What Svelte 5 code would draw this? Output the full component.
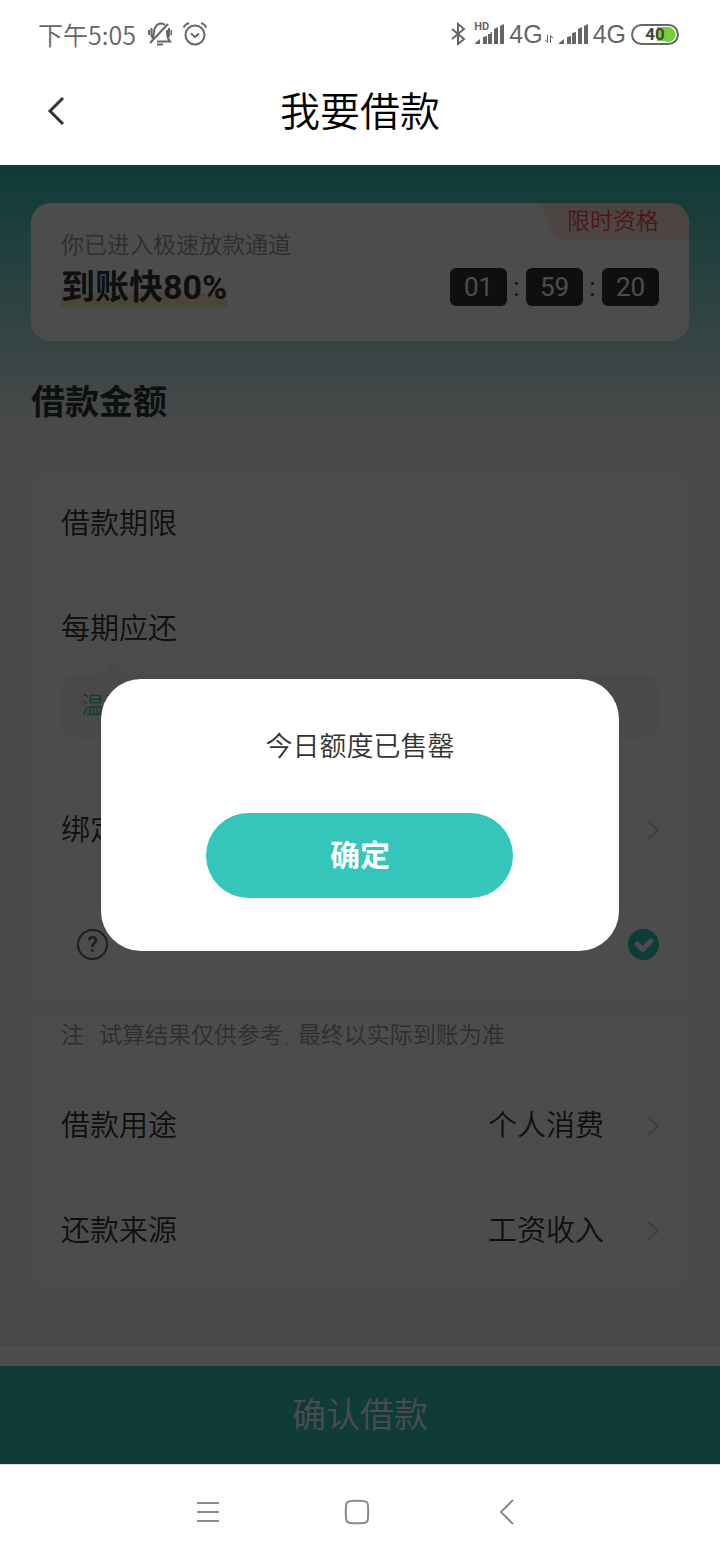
<script lang="ts">
  let showDialog = $state(true);
  let agreed = $state(true);

  const countdown = ["01", "59", "20"];
  const details = [
    { label: "借款用途", value: "个人消费" },
    { label: "还款来源", value: "工资收入" },
  ];
</script>

{#snippet chevron()}
  <svg class="chevron" viewBox="0 0 12 20" aria-hidden="true">
    <path d="M1 1l10 9-10 9" />
  </svg>
{/snippet}

{#snippet signal()}
  <svg class="signal" viewBox="0 0 29 22" aria-hidden="true">
    <path d="M0 21v-1l5-4v5zM8 21v-7l4-1v8zM13 21V10l4-1v12zM19 21V6l4-2v17zM25 21V3l4-2v20z" />
  </svg>
{/snippet}

<div class="screen">
  <div class="status">
    <span class="time">下午5:05</span>
    <svg class="mute" viewBox="0 0 24 24" aria-hidden="true">
      <path d="M4 17C7 13 5 9 7 6c1.500-3 4-4.500 6-4.500S16 2 17 3M19 8c0 5 0 8 3 11.500H9M2 21L20 2M9 22.500h6M1 8v5M3.500 6v9M21 6v9M23.500 8v5" />
    </svg>
    <svg class="alarm" viewBox="0 0 26 26" aria-hidden="true">
      <circle cx="13" cy="14" r="9.500" />
      <path d="M9 12.500l4 3.500 4-3.500M1.500 6.500C3 4 5 2.500 7 2M24.500 6.500C23 4 21 2.500 19 2" />
    </svg>
    <div class="radio">
      <svg class="bluetooth" viewBox="0 0 16 24" aria-hidden="true">
        <path d="M2 7l12 10-6 5V2l6 5L2 17" />
      </svg>
      <div class="sim">
        <span class="hd">HD</span>
        {@render signal()}
      </div>
      <span class="net">4G</span>
      <svg class="updown" viewBox="0 0 10 10" aria-hidden="true">
        <path d="M3.500 1v7.500L1 6M6.500 9V1.500L9 4" />
      </svg>
      {@render signal()}
      <span class="net">4G</span>
      <span class="battery">40</span>
    </div>
  </div>

  <header>
    <button class="back" aria-label="返回">
      <svg viewBox="0 0 18 30" aria-hidden="true"><path d="M16 2L3 15l13 13" /></svg>
    </button>
    <h1>我要借款</h1>
  </header>

  <main>
    <div class="content">
      <section class="promo">
        <div class="badge">
          <svg viewBox="0 0 149 38" preserveAspectRatio="none" aria-hidden="true">
            <path d="M0 0h149v38H27c-7 0-10-4-13-9z" />
          </svg>
          <span>限时资格</span>
        </div>
        <p>你已进入极速放款通道</p>
        <div class="promo-row">
          <strong>到账快80%</strong>
          <div class="countdown">
            {#each countdown as part, i}
              {#if i > 0}<span class="colon">:</span>{/if}
              <span class="digits">{part}</span>
            {/each}
          </div>
        </div>
      </section>

      <h2>借款金额</h2>

      <section class="card terms">
        <div class="row">借款期限</div>
        <div class="row">每期应还</div>
        <div class="tip">温馨</div>
        <button class="row">
          <span>绑定</span>
          {@render chevron()}
        </button>
        <div class="row agreement">
          <button class="help" aria-label="帮助">?</button>
          <label>
            <input type="checkbox" bind:checked={agreed} aria-label="同意" />
            <svg viewBox="0 0 31 31" aria-hidden="true"><path d="M9 15l5.500 5.500L23 12" /></svg>
          </label>
        </div>
      </section>

      <section class="card purpose">
        <p>注: 试算结果仅供参考, 最终以实际到账为准</p>
        {#each details as item}
          <button class="row">
            <span>{item.label}</span>
            <span class="value">{item.value}</span>
            {@render chevron()}
          </button>
        {/each}
      </section>
    </div>

    <footer>
      <button class="submit">确认借款</button>
    </footer>

    {#if showDialog}
      <div class="mask">
        <div class="dialog" role="alertdialog" aria-modal="true" aria-labelledby="dialog-text">
          <p id="dialog-text">今日额度已售罄</p>
          <button onclick={() => (showDialog = false)}>确定</button>
        </div>
      </div>
    {/if}
  </main>

  <nav>
    <button aria-label="菜单">
      <svg viewBox="0 0 26 26" aria-hidden="true"><path d="M2 4h22M2 13h22M2 22h22" /></svg>
    </button>
    <button aria-label="主页">
      <svg viewBox="0 0 26 26" aria-hidden="true">
        <path d="M7 2Q13 1.500 19 2 24 2 24 7 24.500 13 24 19 24 24 19 24 13 24.500 7 24 2 24 2 19 1.500 13 2 7 2 2 7 2z" />
      </svg>
    </button>
    <button aria-label="后退">
      <svg viewBox="0 0 26 26" aria-hidden="true"><path d="M20 1L8 13l12 12" /></svg>
    </button>
  </nav>
</div>

<style>
  :global(body) {
    margin: 0;
    background: #fff;
  }

  .screen {
    --teal: #34c5bb;
    --ink: #333;
    display: flex;
    flex-direction: column;
    min-height: 100vh;
    font-family: Roboto, "Noto Sans CJK SC", sans-serif;
    font-weight: 350;
    color: var(--ink);
  }

  .screen * {
    box-sizing: border-box;
  }

  button {
    padding: 0;
    border: 0;
    background: none;
    font: inherit;
    color: inherit;
  }

  h1,
  h2,
  p {
    margin: 0;
  }

  svg {
    display: block;
    flex-shrink: 0;
    fill: none;
    stroke: currentColor;
    stroke-width: 2;
  }

  .status {
    display: flex;
    align-items: center;
    height: 68px;
    padding: 0 41px 0 38px;
    color: #666;
  }

  .time {
    font-family: "Noto Sans CJK SC", sans-serif;
    font-size: 25px;
    line-height: 36px;
  }

  .mute {
    width: 24px;
    height: 24px;
    margin-left: 12px;
  }

  .alarm {
    width: 26px;
    height: 26px;
    margin-left: 10px;
  }

  .radio {
    display: flex;
    align-items: center;
    gap: 5px;
    margin-left: auto;
  }

  .bluetooth {
    width: 16px;
    height: 24px;
  }

  .sim {
    position: relative;
    margin-left: 4px;
  }

  .hd {
    position: absolute;
    top: -2px;
    left: -1px;
    font-size: 11px;
    font-weight: 700;
    line-height: 11px;
  }

  .signal {
    width: 29px;
    height: 22px;
    fill: currentColor;
    stroke: none;
  }

  .sim .signal {
    clip-path: polygon(0 50%, 52% 50%, 52% 0, 100% 0, 100% 100%, 0 100%);
  }

  .net {
    font-family: "Liberation Sans", sans-serif;
    font-size: 25px;
    line-height: 28px;
  }

  .updown {
    width: 10px;
    height: 10px;
    margin: 10px 0 0 -4px;
    stroke-width: 1;
  }

  .battery {
    width: 48px;
    height: 21px;
    border: 2px solid #666;
    border-radius: 11px;
    background: radial-gradient(circle at 35px 50%, #74d13d 7px, transparent 8px),
      linear-gradient(#74d13d, #74d13d) 24px center / 11px 14px no-repeat;
    font-size: 17px;
    font-weight: 700;
    line-height: 17px;
    text-align: center;
    color: #444;
  }

  header {
    display: grid;
    grid-template-columns: 1fr auto 1fr;
    align-items: center;
    height: 97px;
    padding: 0 47px 12px;
  }

  .back {
    justify-self: start;
  }

  .back svg {
    width: 18px;
    height: 30px;
    stroke-width: 3;
  }

  h1 {
    padding-top: 4px;
    font-size: 40px;
    font-weight: 350;
    line-height: 60px;
    color: #000;
  }

  main {
    position: relative;
    display: flex;
    flex: 1;
    flex-direction: column;
    background: linear-gradient(var(--teal), #f7f7f7 265px);
  }

  .content {
    flex: 1;
    padding: 38px 31px 58px;
  }

  .promo {
    position: relative;
    padding: 27px 30px 34px;
    border-radius: 20px;
    background: #fff;
    overflow: hidden;
  }

  .promo p,
  .badge,
  .purpose p {
    font-size: 23px;
    line-height: 32px;
  }

  .promo p,
  .purpose p {
    color: #999;
  }

  .badge {
    position: absolute;
    top: 0;
    right: 0;
    padding: 3px 30px 3px 28px;
    color: #f5533d;
  }

  .badge svg {
    position: absolute;
    inset: 0;
    width: 100%;
    height: 100%;
    fill: #ffe6e3;
    stroke: none;
  }

  .badge span {
    position: relative;
  }

  .promo-row {
    display: flex;
    align-items: flex-start;
    justify-content: space-between;
    margin-top: 6px;
  }

  .promo strong {
    background: linear-gradient(#ffecc0, #ffecc0) bottom / 100% 14px no-repeat;
    font-size: 34px;
    font-weight: 700;
    line-height: 39px;
  }

  .countdown {
    display: flex;
    font-size: 26px;
    font-weight: 400;
    line-height: 38px;
    text-align: center;
  }

  .digits {
    width: 57px;
    border-radius: 6px;
    background: var(--ink);
    color: #fff;
  }

  .colon {
    width: 19px;
  }

  h2 {
    margin: 37px 0 45px;
    font-size: 34px;
    font-weight: 700;
    line-height: 48px;
  }

  .card {
    padding: 0 30px;
    background: #fff;
  }

  .terms {
    border-radius: 20px 20px 0 0;
  }

  .row {
    display: flex;
    align-items: center;
    justify-content: space-between;
    width: 100%;
    height: 105px;
    font-size: 29px;
    line-height: 42px;
  }

  .value {
    margin: 0 43px 0 auto;
  }

  .chevron {
    width: 12px;
    height: 20px;
    color: #ccc;
  }

  .tip {
    position: relative;
    margin: -7px 0 39px;
    padding: 16px 20px;
    border-radius: 16px;
    background: #f4f4f4;
    font-size: 23px;
    line-height: 32px;
    color: var(--teal);
  }

  .tip::before {
    content: "";
    position: absolute;
    bottom: 100%;
    left: 40px;
    border: 12px solid transparent;
    border-top: 0;
    border-bottom-color: #f8f5f2;
  }

  .agreement {
    height: 113px;
    padding: 12px 0 0 16px;
  }

  .help {
    width: 31px;
    height: 31px;
    border: 2px solid #666;
    border-radius: 50%;
    font-size: 22px;
    font-weight: 500;
    line-height: 27px;
    color: #666;
  }

  .agreement label {
    display: grid;
  }

  .agreement input,
  .agreement svg {
    grid-area: 1 / 1;
    width: 31px;
    height: 31px;
    margin: 0;
  }

  .agreement input {
    appearance: none;
    border-radius: 50%;
    background: #ddd;
  }

  .agreement input:checked {
    background: var(--teal);
  }

  .agreement svg {
    z-index: 0;
    color: #fff;
    stroke-width: 5;
    stroke-linecap: round;
    stroke-linejoin: round;
    pointer-events: none;
  }

  .purpose {
    margin-top: 23px;
    padding-bottom: 2px;
    border-radius: 0 0 20px 20px;
  }

  .purpose p {
    padding: 1px 0 22px;
    font-family: "DejaVu Sans", "Noto Sans CJK SC", sans-serif;
  }

  footer {
    padding-top: 21px;
    border-top: 2px solid #e8e8e8;
    background: #fff;
  }

  .submit {
    width: 100%;
    height: 98px;
    padding-bottom: 6px;
    background: var(--teal);
    font-size: 34px;
    color: #fff;
  }

  .mask {
    position: absolute;
    inset: 0;
    z-index: 1;
    display: flex;
    align-items: center;
    justify-content: center;
    background: rgba(0, 0, 0, 0.7);
  }

  .dialog {
    width: 72%;
    padding: 48px 0 53px;
    border-radius: 40px;
    background: #fff;
    text-align: center;
  }

  .dialog p {
    font-size: 27px;
    line-height: 40px;
  }

  .dialog button {
    width: 307px;
    height: 85px;
    margin-top: 46px;
    padding-bottom: 4px;
    border-radius: 43px;
    background: var(--teal);
    font-size: 30px;
    font-weight: 700;
    color: #fff;
  }

  nav {
    display: flex;
    align-items: center;
    justify-content: center;
    gap: 123px;
    height: 96px;
    padding: 0 7px 2px 0;
    border-top: 1px solid #ddd;
    color: #8c8c8c;
  }

  nav svg {
    width: 26px;
    height: 26px;
  }
</style>
